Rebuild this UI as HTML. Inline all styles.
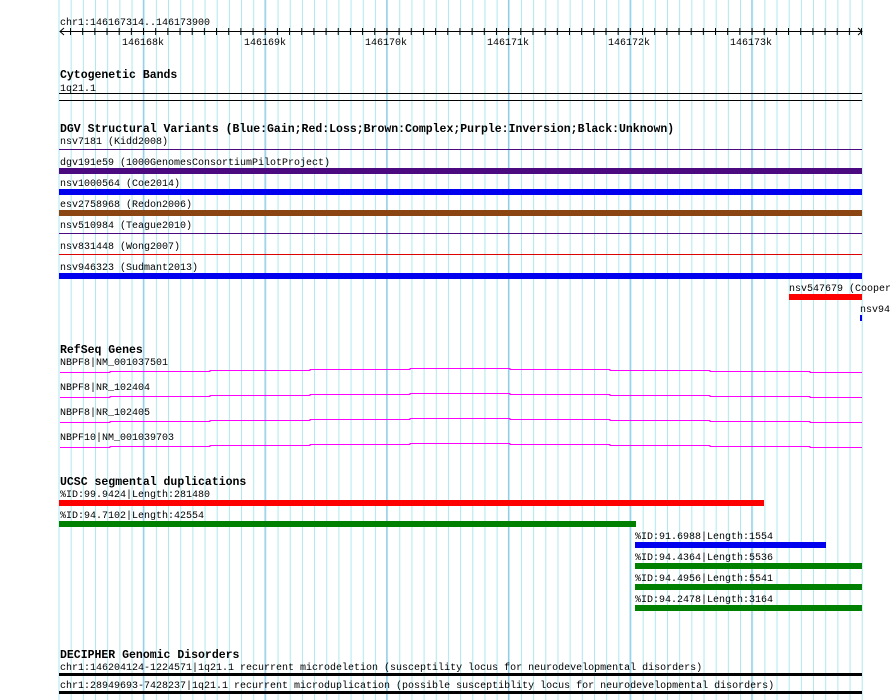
<!DOCTYPE html>
<html><head><meta charset="utf-8"><style>
html,body{margin:0;padding:0;background:#fff;}
svg{display:block;}
text{font-family:"Liberation Mono","DejaVu Sans Mono",monospace;font-size:10px;fill:#000;}
.t{font-size:11.5px;font-weight:bold;}
</style></head><body>
<svg width="890" height="700" viewBox="0 0 890 700" xmlns="http://www.w3.org/2000/svg">
<defs>
<pattern id="minor" patternUnits="userSpaceOnUse" x="58.5" y="0" width="12.17" height="700">
<rect x="0" y="0" width="1" height="700" fill="#aee8ee"/>
</pattern>
<pattern id="major" patternUnits="userSpaceOnUse" x="142.8" y="0" width="121.7" height="700">
<rect x="0" y="0" width="1" height="700" fill="#90c4e8"/>
</pattern>
<pattern id="ticks" patternUnits="userSpaceOnUse" x="70" y="0" width="12.17" height="700">
<rect x="0" y="28" width="1" height="7" fill="#000"/>
</pattern>
</defs>
<rect x="58" y="0" width="805" height="700" fill="url(#minor)"/>
<rect x="142" y="0" width="721" height="700" fill="url(#major)"/>

<!-- axis -->
<text x="60" y="25">chr1:146167314..146173900</text>
<rect x="60" y="31" width="802" height="1" fill="#000"/>
<rect x="69" y="28" width="793" height="7" fill="url(#ticks)"/>
<path d="M64 28 L60 31.5 L64 35 M858 28 L862 31.5 L858 35" stroke="#000" fill="none" stroke-width="1"/>
<text x="122" y="45">146168k</text>
<text x="244" y="45">146169k</text>
<text x="365" y="45">146170k</text>
<text x="487" y="45">146171k</text>
<text x="608" y="45">146172k</text>
<text x="730" y="45">146173k</text>

<!-- cytogenetic -->
<text class="t" x="60" y="78">Cytogenetic Bands</text>
<text x="60" y="91">1q21.1</text>
<rect x="59" y="93" width="803" height="1" fill="#000"/>
<rect x="59" y="100" width="803" height="1" fill="#000"/>

<!-- DGV -->
<text class="t" x="60" y="132">DGV Structural Variants (Blue:Gain;Red:Loss;Brown:Complex;Purple:Inversion;Black:Unknown)</text>
<text x="60" y="144">nsv7181 (Kidd2008)</text>
<rect x="59" y="149" width="803" height="1" fill="#4b0a80"/>
<text x="60" y="165">dgv191e59 (1000GenomesConsortiumPilotProject)</text>
<rect x="59" y="168" width="803" height="6" fill="#4b0a80"/>
<text x="60" y="186">nsv1000564 (Coe2014)</text>
<rect x="59" y="189" width="803" height="6" fill="#0000ee"/>
<text x="60" y="207">esv2758968 (Redon2006)</text>
<rect x="59" y="210" width="803" height="6" fill="#8b4513"/>
<text x="60" y="228">nsv510984 (Teague2010)</text>
<rect x="59" y="233" width="803" height="1" fill="#4b0a80"/>
<text x="60" y="249">nsv831448 (Wong2007)</text>
<rect x="59" y="254" width="803" height="1" fill="#dd0000"/>
<text x="60" y="270">nsv946323 (Sudmant2013)</text>
<rect x="59" y="273" width="803" height="6" fill="#0000ee"/>
<text x="789" y="291">nsv547679 (Cooper</text>
<rect x="789" y="294" width="73" height="6" fill="#ff0000"/>
<text x="860" y="312">nsv94</text>
<rect x="860" y="315" width="2" height="6" fill="#0000ee"/>

<!-- RefSeq -->
<text class="t" x="60" y="353">RefSeq Genes</text>
<g stroke="#ff00ff" stroke-width="1" fill="none">
<path d="M60 372.5 H110 V371.5 H210 V370.5 H310 V369.5 H410 V368.5 H510 V369.5 H610 V370.5 H710 V371.5 H810 V372.5 H862"/>
<path d="M60 397.5 H110 V396.5 H210 V395.5 H310 V394.5 H410 V393.5 H510 V394.5 H610 V395.5 H710 V396.5 H810 V397.5 H862"/>
<path d="M60 422.5 H110 V421.5 H210 V420.5 H310 V419.5 H410 V418.5 H510 V419.5 H610 V420.5 H710 V421.5 H810 V422.5 H862"/>
<path d="M60 447.5 H110 V446.5 H210 V445.5 H310 V444.5 H410 V443.5 H510 V444.5 H610 V445.5 H710 V446.5 H810 V447.5 H862"/>
</g>
<text x="60" y="365">NBPF8|NM_001037501</text>
<text x="60" y="390">NBPF8|NR_102404</text>
<text x="60" y="415">NBPF8|NR_102405</text>
<text x="60" y="440">NBPF10|NM_001039703</text>

<!-- UCSC -->
<text class="t" x="60" y="485">UCSC segmental duplications</text>
<text x="60" y="497">%ID:99.9424|Length:281480</text>
<rect x="59" y="500" width="705" height="6" fill="#ff0000"/>
<text x="60" y="518">%ID:94.7102|Length:42554</text>
<rect x="59" y="521" width="577" height="6" fill="#008000"/>
<text x="635" y="539">%ID:91.6988|Length:1554</text>
<rect x="635" y="542" width="191" height="6" fill="#0000ee"/>
<text x="635" y="560">%ID:94.4364|Length:5536</text>
<rect x="635" y="563" width="227" height="6" fill="#008000"/>
<text x="635" y="581">%ID:94.4956|Length:5541</text>
<rect x="635" y="584" width="227" height="6" fill="#008000"/>
<text x="635" y="602">%ID:94.2478|Length:3164</text>
<rect x="635" y="605" width="227" height="6" fill="#008000"/>

<!-- DECIPHER -->
<text class="t" x="60" y="658">DECIPHER Genomic Disorders</text>
<text x="60" y="670">chr1:146204124-1224571|1q21.1 recurrent microdeletion (susceptility locus for neurodevelopmental disorders)</text>
<rect x="59" y="673" width="803" height="3" fill="#000"/>
<text x="60" y="688">chr1:28949693-7428237|1q21.1 recurrent microduplication (possible susceptiblity locus for neurodevelopmental disorders)</text>
<rect x="59" y="691" width="803" height="3" fill="#000"/>
</svg>
</body></html>
